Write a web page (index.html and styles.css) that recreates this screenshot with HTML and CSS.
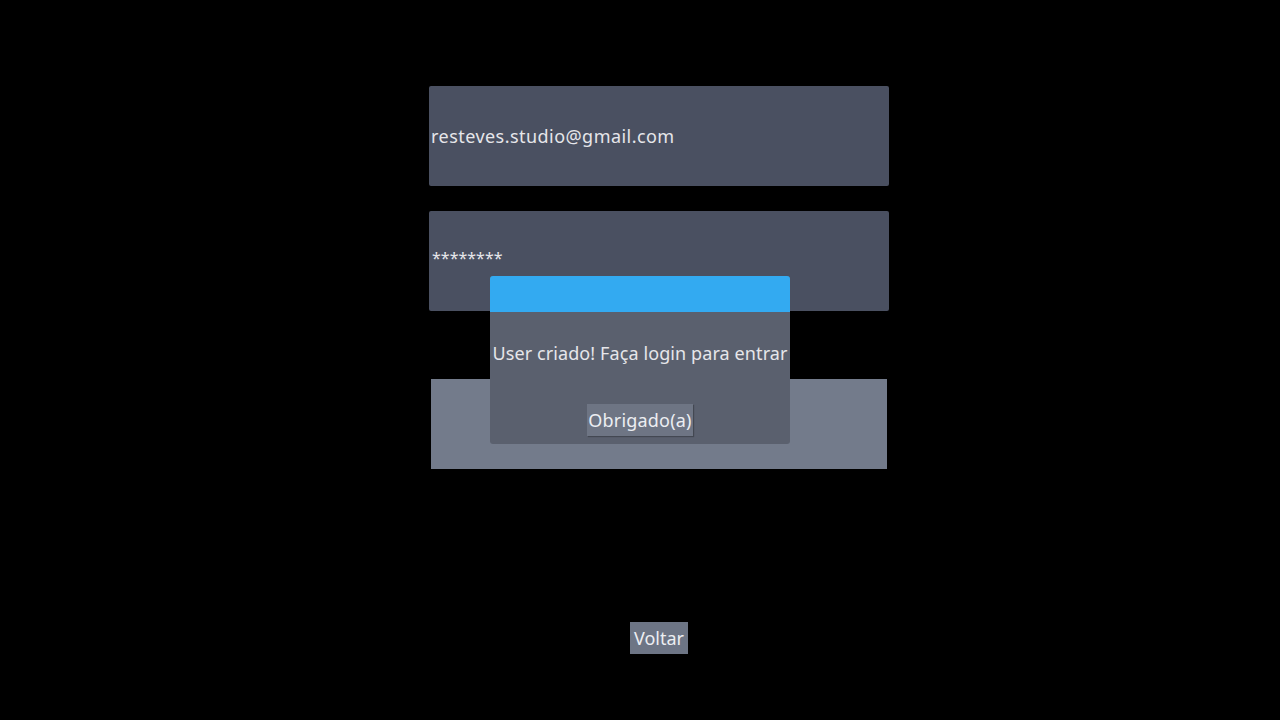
FILE: index.html
```html
<!DOCTYPE html>
<html>
<head>
<meta charset="utf-8">
<link rel="stylesheet" href="styles.css">
</head>
<body>
<main class="screen">
  <div class="form">
    <div class="field field-email"><span class="field-text">resteves.studio@gmail.com</span></div>
    <div class="field field-pass"><span class="field-text stars">********</span></div>
    <div class="submit"></div>
  </div>
  <div class="back-row"><button class="btn back">Voltar</button></div>
  <div class="dialog">
    <div class="dialog-title"></div>
    <div class="dialog-body">
      <p class="dialog-msg">User criado! Faça login para entrar</p>
      <button class="btn ok">Obrigado(a)</button>
    </div>
  </div>
</main>
</body>
</html>
```

FILE: styles.css
```css
html, body {
  margin: 0;
  padding: 0;
  background: #000;
  width: 1280px;
  height: 720px;
  overflow: hidden;
}
.screen {
  position: relative;
  width: 1280px;
  height: 720px;
  font-family: "Noto Sans", "DejaVu Sans", sans-serif;
  color: #e6e6ea;
}
.form {
  display: flex;
  flex-direction: column;
  width: 460px;
  margin-left: 429px;
  padding-top: 86px;
}
.field {
  height: 100px;
  background: #4a5061;
  border-radius: 2px;
  display: flex;
  align-items: center;
  box-sizing: border-box;
  padding-left: 2px;
}
.field-text {
  font-size: 18px;
  letter-spacing: 0.45px;
}
.field-pass {
  margin-top: 25px;
  align-items: flex-start;
  padding-top: 36px;
}
.stars {
  font-size: 16px;
  letter-spacing: 0px;
  padding-left: 1px;
}
.submit {
  margin-top: 68px;
  margin-left: 2px;
  width: 456px;
  height: 90px;
  background: #737b8b;
}
.back-row {
  display: flex;
  justify-content: flex-start;
  padding-left: 630px;
  margin-top: 153px;
}
.btn {
  font-family: "Noto Sans", "DejaVu Sans", sans-serif;
  font-size: 18px;
  color: #eceef2;
  background: #6d7585;
  border: none;
  border-radius: 0;
  padding: 0;
  margin: 0;
  line-height: 32px;
  height: 32px;
}
.back {
  width: 58px;
  letter-spacing: 0px;
}
.dialog {
  position: absolute;
  left: 490px;
  top: 276px;
  width: 300px;
  height: 168px;
  border-radius: 3px;
  overflow: hidden;
  background: #5a606e;
  display: flex;
  flex-direction: column;
}
.dialog-title {
  height: 36px;
  background: #33aaf1;
}
.dialog-body {
  flex: 1;
  display: flex;
  flex-direction: column;
  align-items: center;
}
.dialog-msg {
  margin: 29px 0 0;
  font-size: 18px;
  line-height: 24px;
  letter-spacing: 0.1px;
  white-space: nowrap;
}
.ok {
  margin-top: 39px;
  width: 106px;
  letter-spacing: 0.2px;
  box-shadow: 1px 1px 1px rgba(0,0,0,0.25);
  background: #6e7584;
}
```
